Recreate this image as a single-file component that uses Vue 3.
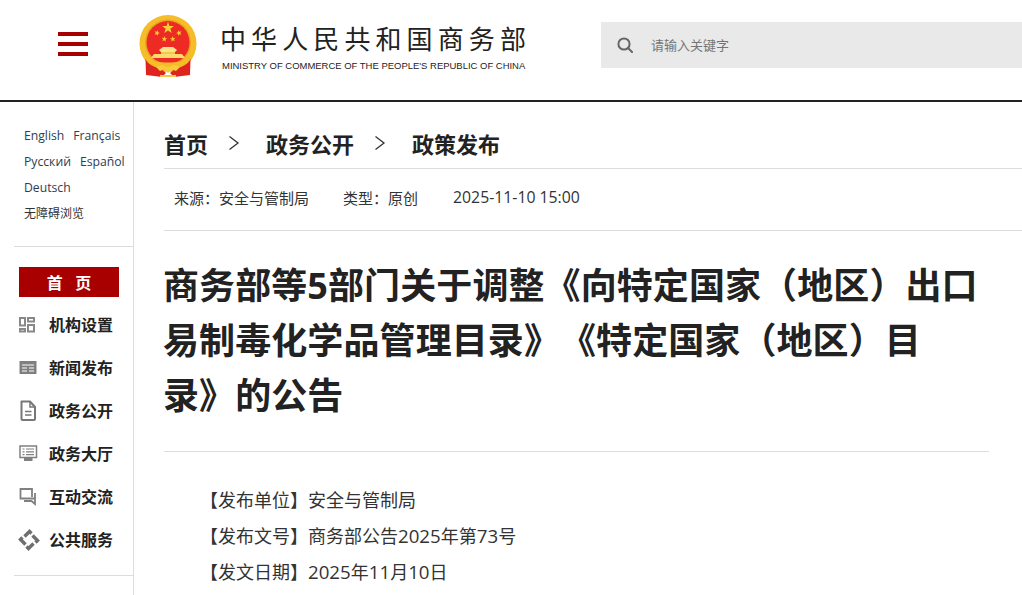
<script setup>
const langs = [['English', 'Français'], ['Русский', 'Español'], ['Deutsch']]
const navItems = [
  { label: '机构设置', icon: 'grid' },
  { label: '新闻发布', icon: 'news' },
  { label: '政务公开', icon: 'doc' },
  { label: '政务大厅', icon: 'screen' },
  { label: '互动交流', icon: 'chat' },
  { label: '公共服务', icon: 'service' }
]
const crumbs = ['首页', '政务公开', '政策发布']
const infoRows = [
  [{ t: '【发布单位】安全与管制局' }],
  [{ t: '【发布文号】商务部公告' }, { t: '2025', n: true }, { t: '年第' }, { t: '73', n: true }, { t: '号' }],
  [{ t: '【发文日期】' }, { t: '2025', n: true }, { t: '年' }, { t: '11', n: true }, { t: '月' }, { t: '10', n: true }, { t: '日' }]
]

function star(cx, cy, r, tilt = 0) {
  const pts = []
  for (let i = 0; i < 10; i++) {
    const rad = i % 2 === 0 ? r : r * 0.4
    const a = -Math.PI / 2 + (i * Math.PI) / 5 + tilt
    pts.push((cx + rad * Math.cos(a)).toFixed(2) + ',' + (cy + rad * Math.sin(a)).toFixed(2))
  }
  return pts.join(' ')
}
const stars = [
  star(29, 13, 6.2),
  star(18, 18, 3, 0.3),
  star(40, 18, 3, -0.3),
  star(25.4, 24, 3, 0.15),
  star(33.8, 24, 3, -0.15)
]
const armAngles = [0, 90, 180, 270]
</script>

<template>
  <div class="page">
    <header class="header">
      <div class="burger"><i></i><i></i><i></i></div>
      <svg class="emblem" viewBox="0 0 58 62" width="58" height="62">
        <circle cx="29" cy="28.500" r="28.500" fill="#f6bd2a" />
        <circle cx="29" cy="27.500" r="23" fill="#e9a31c" />
        <circle cx="29" cy="27.500" r="21.500" fill="#ee2a24" />
        <polygon v-for="(p, i) in stars" :key="i" :points="p" fill="#f7cf35" />
        <path d="M20 35 L24 32 H34 L38 35 L36 37 H22 Z" fill="#fbe48a" />
        <rect x="22" y="37" width="14" height="2" fill="#f4c64a" />
        <path d="M12 43 L15 39 H43 L46 43 Z" fill="#fbdd6e" />
        <path d="M6 43 C14 49 44 49 52 43 L50 48 C44 54 14 54 8 48 Z" fill="#f6bd2a" />
        <path d="M6.500 44 C9 49 14 52 21 53 L27 58 L23 62 L7 60 Z" fill="#df2420" />
        <path d="M51.500 44 C49 49 44 52 37 53 L31 58 L35 62 L51 60 Z" fill="#df2420" />
        <path d="M17 52 L23 50 L29 52.500 L35 50 L41 52 L37 56 L33 54.500 L29 58 L25 54.500 L21 56 Z" fill="#f8cb3c" />
        <rect x="21" y="60" width="16" height="2" fill="#f6c84a" />
      </svg>
      <div class="brand">
        <div class="brand-cn">中华人民共和国商务部</div>
        <div class="brand-en">MINISTRY OF COMMERCE OF THE PEOPLE'S REPUBLIC OF CHINA</div>
      </div>
      <div class="search">
        <svg class="search-icon" viewBox="0 0 16 16" width="16" height="16">
          <circle cx="7" cy="7" r="5.600" fill="none" stroke="#666" stroke-width="2" />
          <path d="M11 11 L15 15" stroke="#666" stroke-width="2" stroke-linecap="round" />
        </svg>
        <span class="placeholder">请输入关键字</span>
      </div>
    </header>

    <div class="main">
      <aside class="sidebar">
        <div class="langs">
          <div v-for="(row, i) in langs" :key="i" class="lang-row">
            <span v-for="l in row" :key="l">{{ l }}</span>
          </div>
          <div class="lang-row cn">无障碍浏览</div>
        </div>
        <div class="nav">
          <div class="home-btn">首&nbsp;&nbsp;&nbsp;页</div>
          <div v-for="item in navItems" :key="item.label" class="nav-item">
            <svg class="nav-icon" viewBox="0 0 20 22" width="20" height="22">
              <g v-if="item.icon === 'grid'" fill="none" stroke="#888" stroke-width="2">
                <rect x="1" y="4" width="5" height="7.500" />
                <rect x="9" y="4" width="6" height="3.500" />
                <rect x="1" y="15" width="5" height="2.500" />
                <rect x="9" y="11" width="6" height="6.500" />
              </g>
              <g v-else-if="item.icon === 'news'">
                <rect x="0.500" y="4" width="17" height="13" fill="#808080" />
                <path d="M3 8 H15 M3 11 H8 M10 11 H15 M3 14 H8 M10 14 H15" stroke="#fff" stroke-width="1" />
              </g>
              <g v-else-if="item.icon === 'doc'" fill="none" stroke="#777" stroke-width="2">
                <path d="M2.500 1.500 H11 L16 7 V19 Q16 20 15 20 H3.500 Q2.500 20 2.500 19 Z" stroke-linejoin="round" />
                <path d="M11 1.500 V7 H16" stroke-width="1.500" />
                <path d="M6 11.500 H12.500 M6 15 H12.500" stroke-width="1.500" />
              </g>
              <g v-else-if="item.icon === 'screen'" fill="none" stroke="#808080">
                <rect x="1" y="3" width="16.500" height="11.500" stroke-width="1.500" />
                <path d="M3.500 6 H5.500 M7 6 H15 M3.500 8.800 H5.500 M7 8.800 H15 M3.500 11.600 H5.500 M7 11.600 H15" stroke-width="1.200" />
                <path d="M5 16.500 H13.500" stroke-width="3" />
              </g>
              <g v-else-if="item.icon === 'chat'" fill="none" stroke="#808080" stroke-width="1.800">
                <path d="M13 11 V3 H1.500 V12.500 H16" />
                <path d="M16 7 V18 L12.500 15 H5" stroke-linejoin="miter" />
              </g>
              <g v-else fill="none" stroke="#6f6f6f" stroke-width="3.400" stroke-linejoin="miter">
                <path v-for="a in armAngles" :key="a" d="M5.500 7.500 L10.500 2.500 L12.500 4.500" :transform="`rotate(${a} 10 11)`" />
              </g>
            </svg>
            <span>{{ item.label }}</span>
          </div>
        </div>
      </aside>

      <main class="content">
        <nav class="crumbs">
          <template v-for="(c, i) in crumbs" :key="c">
            <span class="crumb">{{ c }}</span>
            <svg v-if="i < crumbs.length - 1" class="chev" viewBox="0 0 12 16" width="12" height="16">
              <path d="M1.500 1.500 L10 8 L1.500 14.500" fill="none" stroke="#333" stroke-width="1.300" />
            </svg>
          </template>
        </nav>
        <div class="meta">
          <span>来源：安全与管制局</span>
          <span>类型：原创</span>
          <span class="date">2025-11-10 15:00</span>
        </div>
        <article class="article">
          <h1>商务部等5部门关于调整《向特定国家（地区）出口易制毒化学品管理目录》《特定国家（地区）目录》的公告</h1>
          <div class="info">
            <p v-for="(r, i) in infoRows" :key="i"><span v-for="(s, j) in r" :key="j" :class="{ num: s.n }">{{ s.t }}</span></p>
          </div>
        </article>
      </main>
    </div>
  </div>
</template>

<style>
html, body { margin: 0; overflow: hidden; background: #fff; }
</style>

<style scoped>
.page {
  width: 1022px;
  height: 595px;
  overflow: hidden;
  font-family: "Open Sans", "Noto Sans CJK SC", sans-serif;
  color: #222;
  text-spacing-trim: space-all;
}
.header {
  height: 100px;
  display: flex;
  align-items: flex-start;
  border-bottom: 2px solid #222;
}
.burger {
  margin: 32px 0 0 58px;
  width: 30px;
  height: 24px;
  display: flex;
  flex-direction: column;
  justify-content: space-between;
}
.burger i { display: block; height: 4px; background: #a80000; }
.emblem { margin: 15px 0 0 51px; }
.brand { margin: 21px 0 0 24px; width: 306px; }
.brand-cn {
  margin-left: -1px;
  font-size: 26px;
  line-height: 36px;
  letter-spacing: 5.100px;
  white-space: nowrap;
  color: #222;
}
.brand-en {
  margin: 3px 0 0 1px;
  font-family: "Liberation Sans", sans-serif;
  font-size: 9.470px;
  line-height: 12px;
  white-space: nowrap;
  color: #222;
}
.search {
  margin: 22px 0 0 74px;
  flex: 1;
  height: 46px;
  background: #e9e9e9;
  display: flex;
  align-items: center;
  padding-left: 16px;
}
.placeholder { margin: 0 0 1px 18px; font-size: 13px; color: #757575; }
.main { display: flex; height: 493px; }
.sidebar {
  width: 119px;
  flex: none;
  border-right: 1px solid #ddd;
  padding-left: 14px;
}
.langs { padding: 21px 0 19px 10px; border-bottom: 1px solid #ddd; }
.lang-row {
  font-size: 12.200px;
  line-height: 26px;
  height: 26px;
  display: flex;
  gap: 9px;
  color: #2c3e50;
  white-space: nowrap;
}
.lang-row.cn { color: #333; font-size: 12px; }
.nav {
  padding: 20px 0 14px 5px;
  border-bottom: 1px solid #ddd;
}
.home-btn {
  width: 100px;
  height: 30px;
  background: #a80000;
  color: #fff;
  font-size: 16px;
  font-weight: 700;
  line-height: 32px;
  text-align: center;
  margin-bottom: 6px;
}
.nav-item {
  height: 43px;
  display: flex;
  align-items: center;
  gap: 10px;
  font-size: 16px;
  font-weight: 700;
  line-height: 24px;
  color: #222;
  white-space: nowrap;
}
.nav-icon { flex: none; overflow: visible; }
.content { flex: 1; padding-left: 30px; min-width: 0; }
.crumbs {
  height: 67px;
  display: flex;
  align-items: center;
  border-bottom: 1px solid #ddd;
  box-sizing: border-box;
  padding-top: 15px;
}
.crumb { font-size: 22px; font-weight: 700; color: #222; }
.chev { margin: 0 26px 0 20px; }
.meta {
  height: 62px;
  display: flex;
  align-items: center;
  gap: 34px;
  padding: 0 0 5px 10px;
  border-bottom: 1px solid #ddd;
  font-size: 15px;
  color: #333;
  box-sizing: border-box;
}
.date { font-size: 15.800px; margin-left: 1px; }
.article { width: 825px; }
h1 {
  margin: 0 0 0 -1px;
  padding: 27px 0 28px;
  font-size: 36px;
  line-height: 55px;
  font-weight: 700;
  letter-spacing: 0.090px;
  color: #222;
}
.info { padding-top: 30px; border-top: 1px solid #ddd; }
.info p {
  margin: 0;
  text-indent: 36px;
  font-size: 18px;
  line-height: 36px;
  color: #333;
}
.num { font-size: 18.700px; }
</style>
